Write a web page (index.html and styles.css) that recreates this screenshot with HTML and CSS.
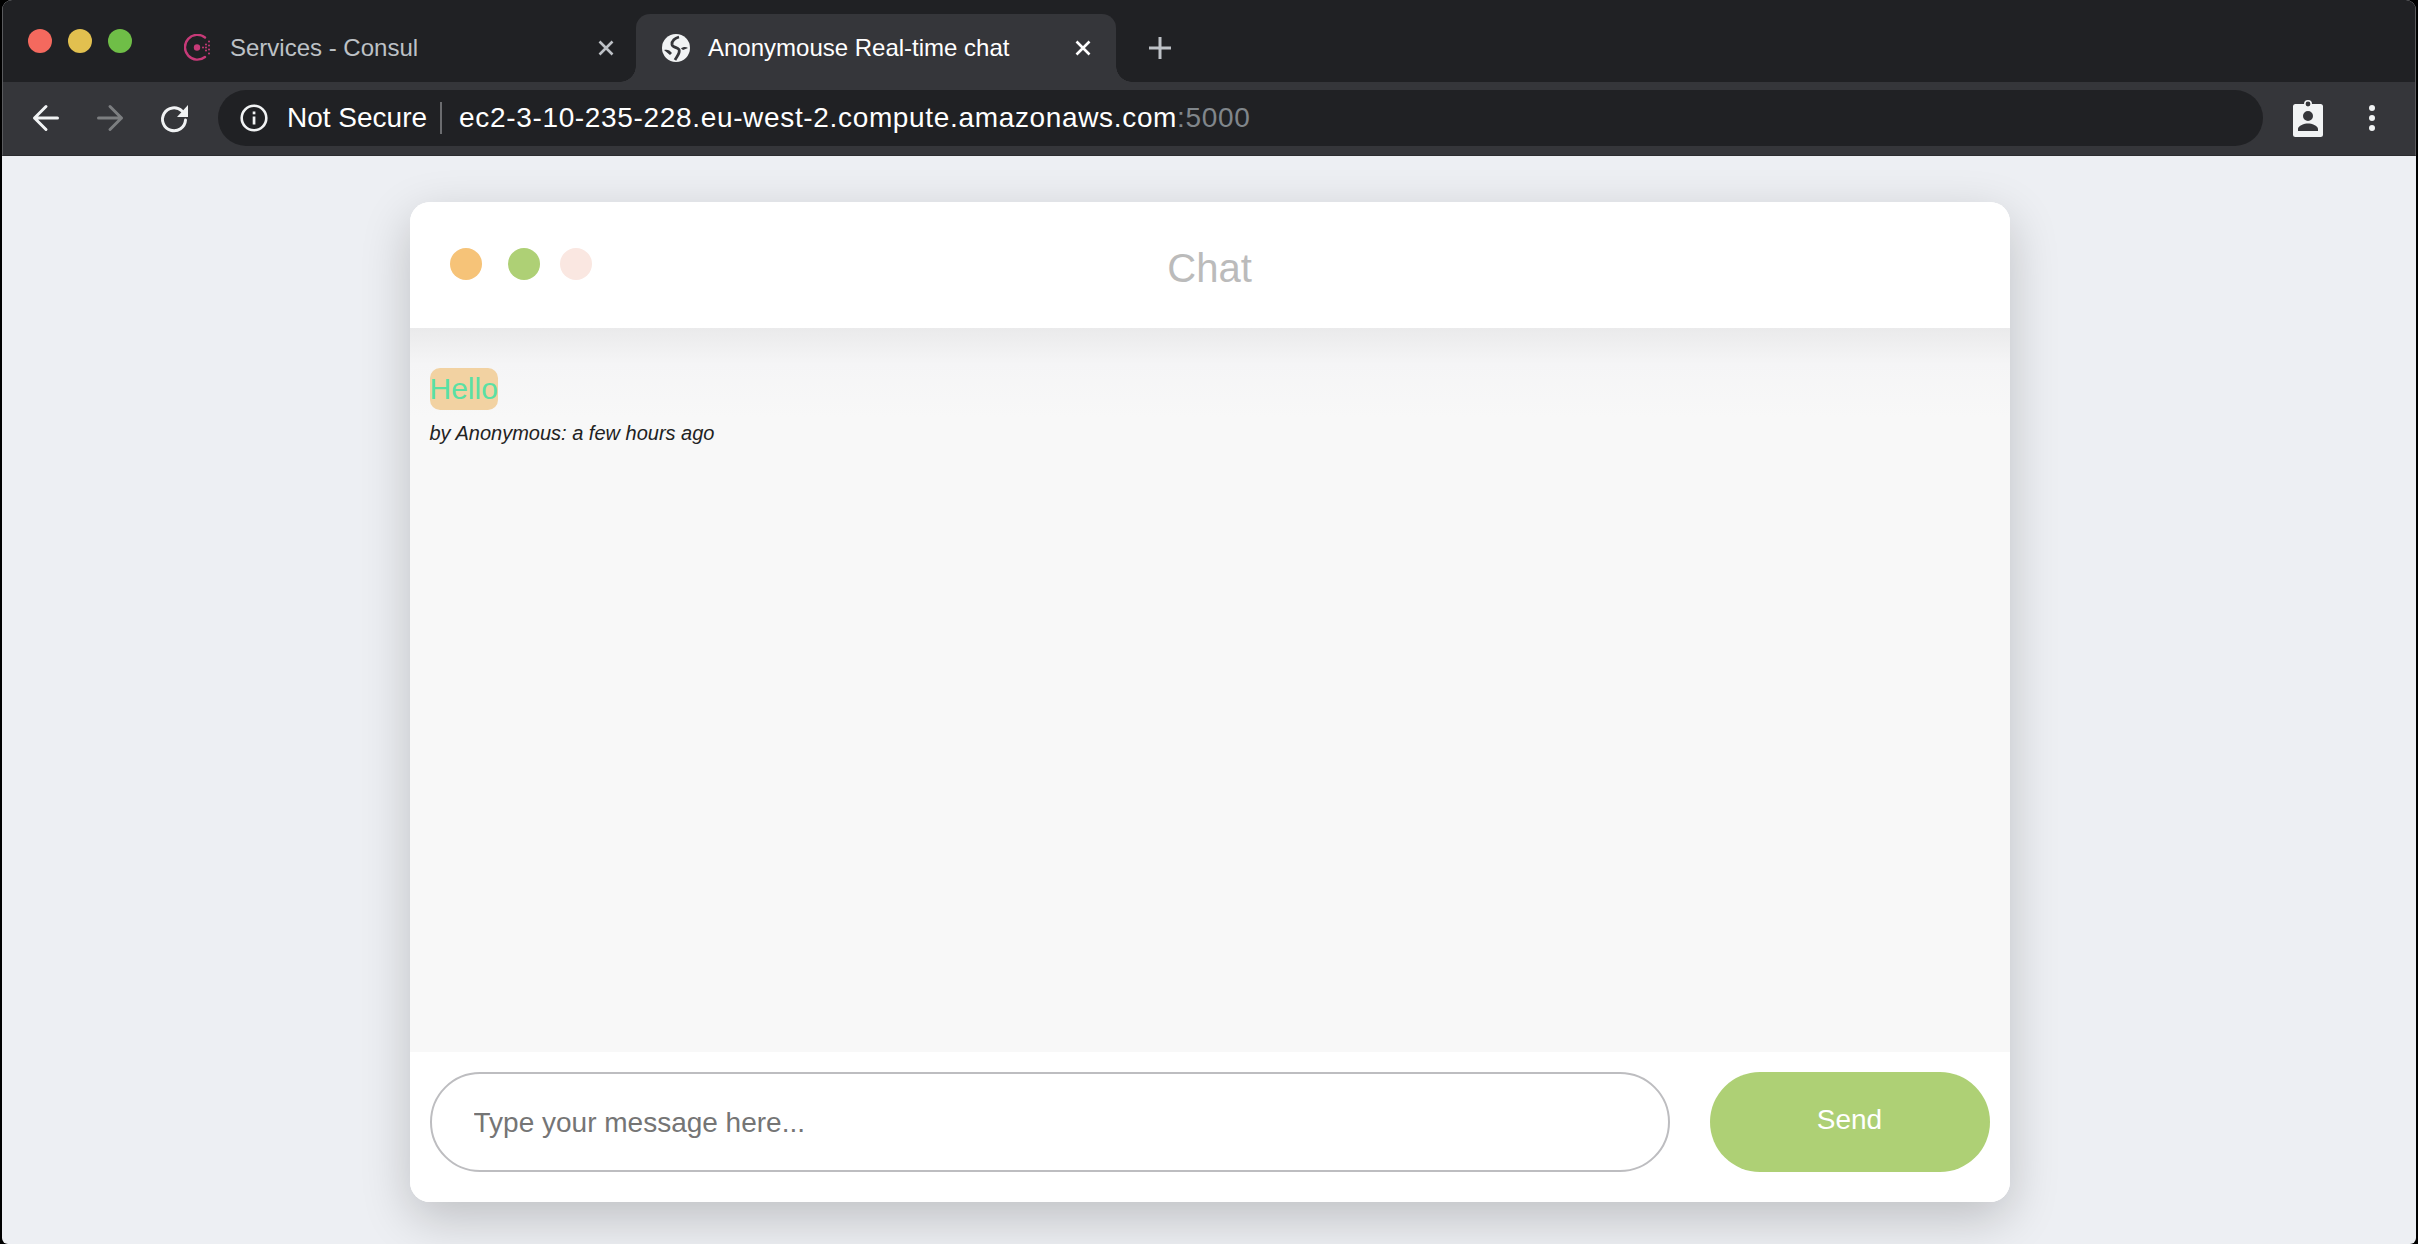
FILE: index.html
```html
<!DOCTYPE html>
<html lang="en">

<head>
    <meta charset="UTF-8">
    <meta name="viewport" content="width=device-width, initial-scale=1.0">
    <title>Anonymouse Real-time chat</title>
    <link rel="stylesheet" href="styles.css">
</head>

<body>
    <div class="browser">
        <div class="tab-strip">
            <div class="traffic-lights">
                <span class="light light-red"></span>
                <span class="light light-yellow"></span>
                <span class="light light-green"></span>
            </div>
            <div class="tab">
                <svg class="tab-icon" viewBox="0 0 28 28">
                    <path d="M21 3.500A12.400 12.400 0 1 0 21 23" fill="none" stroke="#c73a78" stroke-width="2.400" stroke-linecap="round"/>
                    <circle cx="13" cy="13.500" r="3.200" fill="#c73a78"/>
                    <circle cx="19" cy="13.500" r="1" fill="#c73a78"/>
                    <circle cx="22" cy="10.500" r="1" fill="#c73a78"/>
                    <circle cx="22" cy="13.500" r="1" fill="#c73a78"/>
                    <circle cx="22" cy="16.500" r="1" fill="#c73a78"/>
                    <circle cx="25" cy="7.500" r="1" fill="#c73a78"/>
                    <circle cx="25" cy="11.500" r="1" fill="#c73a78"/>
                    <circle cx="25" cy="15.500" r="1" fill="#c73a78"/>
                    <circle cx="25" cy="19.500" r="1" fill="#c73a78"/>
                </svg>
                <span class="tab-title">Services - Consul</span>
                <svg class="tab-close" viewBox="0 0 16 16"><path d="M1.500 1.500l13 13M14.500 1.500l-13 13"/></svg>
            </div>
            <div class="tab tab-active">
                <svg class="tab-icon" viewBox="0 0 28 28">
                    <circle cx="14" cy="14" r="14" fill="#f1f3f4"/>
                    <path d="M17 3C13 4 9.500 7 10 10.500C10.500 13.500 15 13 17 15.500C18.500 19 15 22 13 26" fill="none" stroke="#35363a" stroke-width="2.800"/>
                    <path d="M2 16C5 15 8 16 10 19L8 21ZM26 14C24 12.500 21 12.500 19 14.500L21 16Z" fill="#35363a"/>
                </svg>
                <span class="tab-title">Anonymouse Real-time chat</span>
                <svg class="tab-close" viewBox="0 0 16 16"><path d="M1.500 1.500l13 13M14.500 1.500l-13 13"/></svg>
            </div>
            <svg class="new-tab" viewBox="0 0 24 24"><path d="M12 1v22M1 12h22"/></svg>
        </div>

        <div class="toolbar">
            <svg class="nav-icon" viewBox="0 0 26 26"><path d="M24.500 13H1.500M13 1.500L1.500 13L13 24.500"/></svg>
            <svg class="nav-icon nav-disabled" viewBox="0 0 26 26"><path d="M1.500 13h23M13 1.500L24.500 13L13 24.500"/></svg>
            <svg class="nav-icon" viewBox="0 0 26 26">
                <path d="M21 6A11.500 11.500 0 1 0 24.500 15"/>
                <path class="nav-fill" d="M27 0v12H16z"/>
            </svg>
            <div class="omnibox">
                <svg class="info-icon" viewBox="0 0 28 28">
                    <circle cx="14" cy="14" r="12.300" fill="none" stroke="#f1f3f4" stroke-width="2.600"/>
                    <rect x="12.700" y="12.500" width="2.700" height="8" fill="#f1f3f4"/>
                    <rect x="12.700" y="7.500" width="2.700" height="2.800" fill="#f1f3f4"/>
                </svg>
                <span class="security">Not Secure</span>
                <span class="omni-sep"></span>
                <span class="url">ec2-3-10-235-228.eu-west-2.compute.amazonaws.com<span class="url-port">:5000</span></span>
            </div>
            <svg class="account-icon" viewBox="0 0 30 38">
                <path fill="#f1f3f4" fill-rule="evenodd" d="M11 5a4 4 0 0 1 8 0h8.500a2.500 2.500 0 0 1 2.500 2.500v28a2.500 2.500 0 0 1-2.500 2.500h-25a2.500 2.500 0 0 1-2.500-2.500v-28a2.500 2.500 0 0 1 2.500-2.500zM15 2.600a2.400 2.400 0 1 0 0 4.800a2.400 2.400 0 0 0 0-4.800zM15 12a5 5 0 1 0 0 10a5 5 0 0 0 0-10zM5 32v-2c0-3.500 6.500-5.500 10-5.500s10 2 10 5.500v2z"/>
            </svg>
            <div class="menu-dots"><span></span><span></span><span></span></div>
        </div>

        <main class="page">
            <section class="chat">
                <header class="chat-head">
                    <div class="chat-dots">
                        <span class="dot dot-orange"></span>
                        <span class="dot dot-green"></span>
                        <span class="dot dot-pink"></span>
                    </div>
                    <h1 class="chat-title">Chat</h1>
                </header>
                <div class="messages">
                    <div class="bubble">Hello</div>
                    <p class="meta">by Anonymous: a few hours ago</p>
                </div>
                <form class="composer">
                    <input class="msg-input" type="text" placeholder="Type your message here...">
                    <button class="send-btn" type="button">Send</button>
                </form>
            </section>
        </main>
    </div>
</body>

</html>
```

FILE: styles.css
```css
:root {
    --strip: #202124;
    --bar: #35363a;
    --icon: #f1f3f4;
    --rim: #5a5b5e;
    --green: #aed075;
}

html, body {
    height: 100%;
}

body {
    margin: 0;
    background-color: #000;
    font-family: 'Liberation Sans', Arial, sans-serif;
    overflow: hidden;
}

.browser {
    display: flex;
    flex-direction: column;
    height: 100%;
    margin: 0 2px;
    background-color: #edeff3;
    border-radius: 10px 10px 6px 6px;
    overflow: hidden;
}

.tab-strip {
    display: flex;
    align-items: flex-end;
    height: 82px;
    box-sizing: border-box;
    background-color: var(--strip);
    border-left: 1px solid var(--rim);
    border-right: 1px solid var(--rim);
}

.traffic-lights {
    display: flex;
    gap: 16px;
    align-self: flex-start;
    margin: 29px 0 0 25px;
    width: 136px;
    flex: none;
}

.light {
    width: 24px;
    height: 24px;
    border-radius: 50%;
}

.light-red { background-color: #f4695e; }
.light-yellow { background-color: #e2c04f; }
.light-green { background-color: #6fbe47; }

.tab {
    display: flex;
    align-items: center;
    width: 472px;
    height: 68px;
    box-sizing: border-box;
    padding: 0 22px 0 20px;
    color: #bdc1c6;
    font-size: 24px;
}

.tab-active {
    position: relative;
    width: 480px;
    padding: 0 25px 0 26px;
    background-color: var(--bar);
    border-radius: 14px 14px 0 0;
    color: #fff;
}

/* the small flares where the tab meets the toolbar */
.tab-active::before,
.tab-active::after {
    content: "";
    position: absolute;
    bottom: 0;
    width: 16px;
    height: 16px;
}

.tab-active::before {
    left: -16px;
    background: radial-gradient(circle at 0 0, transparent 15.500px, var(--bar) 16px);
}

.tab-active::after {
    right: -16px;
    background: radial-gradient(circle at 100% 0, transparent 15.500px, var(--bar) 16px);
}

.tab-icon {
    width: 28px;
    height: 28px;
    flex: none;
    margin-right: 18px;
}

.tab-title {
    flex: 1;
    white-space: nowrap;
}

.tab-close {
    width: 16px;
    height: 16px;
    flex: none;
    fill: none;
    stroke: currentColor;
    stroke-width: 2.600;
}

.new-tab {
    width: 24px;
    height: 24px;
    margin: 0 0 22px 32px;
    fill: none;
    stroke: #bdc1c6;
    stroke-width: 3;
}

.toolbar {
    display: flex;
    align-items: center;
    height: 74px;
    box-sizing: border-box;
    padding: 0 40px 1px 30px;
    background-color: var(--bar);
    border-left: 1px solid var(--rim);
    border-right: 1px solid var(--rim);
    border-bottom: 1px solid #2b2c2f;
}

.nav-icon {
    width: 26px;
    height: 26px;
    flex: none;
    margin-right: 38px;
    fill: none;
    stroke: var(--icon);
    stroke-width: 3;
    stroke-linecap: round;
    stroke-linejoin: round;
    overflow: visible;
}

.nav-disabled {
    stroke: #7c7e80;
}

.nav-fill {
    fill: var(--icon);
    stroke: none;
}

.omnibox {
    display: flex;
    align-items: center;
    flex: 1;
    height: 56px;
    margin-left: -7px;
    padding-left: 22px;
    background-color: var(--strip);
    border-radius: 28px;
    color: #fff;
    font-size: 28px;
    white-space: nowrap;
}

.info-icon {
    width: 28px;
    height: 28px;
    flex: none;
    margin-right: 19px;
}

.omni-sep {
    width: 2px;
    height: 32px;
    margin: 0 17px 0 13px;
    background-color: #6b6c6f;
}

.url {
    letter-spacing: 0.660px;
}

.url-port {
    color: #80868b;
}

.account-icon {
    width: 30px;
    height: 38px;
    flex: none;
    margin-left: 30px;
}

.menu-dots {
    display: flex;
    flex-direction: column;
    gap: 3.500px;
    margin-left: 46px;
}

.menu-dots span {
    width: 6.500px;
    height: 6.500px;
    border-radius: 50%;
    background-color: var(--icon);
}

.page {
    flex: 1;
    display: flex;
    justify-content: center;
    padding: 46px 0 0;
}

.chat {
    display: flex;
    flex-direction: column;
    width: 1600px;
    height: 1000px;
    margin-left: 1px;
    background-color: #fff;
    border-radius: 20px;
    box-shadow: 0 16px 50px rgba(0, 0, 0, 0.2);
    overflow: hidden;
}

.chat-head {
    position: relative;
    display: flex;
    align-items: center;
    justify-content: center;
    height: 126px;
    flex: none;
    background-color: #fff;
}

.chat-dots {
    position: absolute;
    left: 40px;
    top: 46px;
    display: flex;
}

.dot {
    width: 32px;
    height: 32px;
    border-radius: 50%;
}

.dot-orange { background-color: #f6c378; margin-right: 26px; }
.dot-green { background-color: var(--green); margin-right: 20px; }
.dot-pink { background-color: #fae7e1; }

.chat-title {
    margin: 6px 0 0;
    color: #bbb;
    font-size: 40px;
    font-weight: normal;
}

.messages {
    flex: 1;
    padding: 40px 20px 0;
    background: linear-gradient(#eaeaeb, #f5f5f6 36px, #f8f8f8 90px);
}

.bubble {
    display: table;
    height: 42px;
    line-height: 42px;
    background-color: #f2d2a2;
    border-radius: 10px;
    color: #5ae0a4;
    font-size: 30px;
}

.meta {
    margin: 12px 0 0;
    color: #222;
    font-size: 20px;
    font-style: italic;
}

.composer {
    display: flex;
    gap: 40px;
    height: 150px;
    flex: none;
    box-sizing: border-box;
    padding: 20px;
    background-color: #fff;
}

.msg-input {
    flex: 1;
    height: 100px;
    box-sizing: border-box;
    padding: 2px 42px 0;
    border: 2px solid #bdbdc0;
    border-radius: 50px;
    outline: none;
    font-family: inherit;
    font-size: 28px;
}

.msg-input::placeholder {
    color: #757575;
}

.send-btn {
    width: 280px;
    height: 100px;
    padding: 0 0 4px;
    border: none;
    border-radius: 50px;
    background-color: var(--green);
    color: #fff;
    font-family: inherit;
    font-size: 28px;
}
```
